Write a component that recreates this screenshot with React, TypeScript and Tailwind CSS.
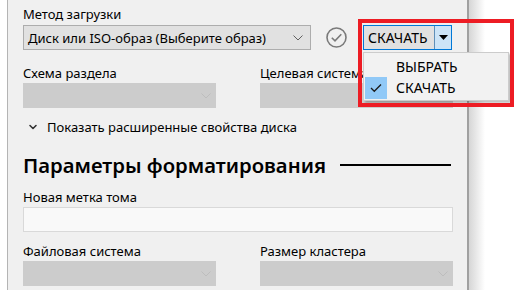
import { ChevronDown } from 'lucide-react';

const font = "font-['Noto_Sans','Open_Sans',sans-serif]";

/** Small windows-style chevron used in combo boxes */
function ComboChevron({ color = '#606060' }: { color?: string }) {
  return (
    <svg width="10" height="6" viewBox="0 0 10 6" fill="none">
      <path d="M0.5 0.5 5 5 9.5 0.5" stroke={color} strokeWidth="1" />
    </svg>
  );
}

function DisabledCombo({ className = '' }: { className?: string }) {
  return (
    <div className={`h-[25px] bg-[#cccccc] flex items-center justify-end pr-[5px] ${className}`}>
      <ComboChevron color="#bdbdbd" />
    </div>
  );
}

export default function App() {
  return (
    <div className={`relative w-[516px] h-[290px] bg-white overflow-hidden flex text-[13px] text-[#000] ${font}`}>
      <div className="w-[7px] shrink-0 bg-white" />
      <div className="w-[462px] shrink-0 h-full bg-[#f0f0f0] border-l border-l-[#b4b4b4] border-r-2 border-r-[#a0a0a0] pl-[15px] pt-[4px]">
        {/* Метод загрузки */}
        <div className="h-[21px] leading-[20px]">Метод загрузки</div>
        <div className="flex items-center h-[25px]">
          <div className="w-[288px] h-[25px] bg-[#e1e1e1] border border-[#adadad] flex items-center justify-between pl-[4px] pr-[7px]">
            <span className="leading-[20px] text-[#000]">Диск или ISO-образ (Выберите образ)</span>
            <ComboChevron />
          </div>
          <div className="ml-[15px]">
            <svg width="21" height="21" viewBox="0 0 21 21" fill="none">
              <circle cx="10.5" cy="10.5" r="9.5" stroke="#7a7a7a" strokeWidth="1.6" />
              <path d="M5.8 10.7 9 13.9 15.3 7.3" stroke="#7a7a7a" strokeWidth="1.6" />
            </svg>
          </div>
          <div className="ml-[16px] w-[89px] h-[25px] border border-[#0078d7] flex text-[14px]">
            <div className="flex-1 bg-[#e1e1e1] flex items-center pl-[4px] leading-[20px] border-r border-r-[#5f8fb8]">
              СКАЧАТЬ
            </div>
            <div className="w-[16px] bg-[#cce4f7] flex items-center justify-center">
              <svg width="9" height="5" viewBox="0 0 9 5">
                <path d="M0 0H9L4.5 5Z" fill="#000" />
              </svg>
            </div>
          </div>
        </div>

        {/* Схема раздела / Целевая система */}
        <div className="grid grid-cols-[193px_193px] gap-x-[44px] mt-[13px]">
          <div className="h-[20px] leading-[20px]">Схема раздела</div>
          <div className="h-[20px] leading-[20px] whitespace-nowrap">Целевая система</div>
          <DisabledCombo />
          <DisabledCombo />
        </div>

        <div className="mt-[9px] h-[20px] flex items-center leading-[20px]">
          <ChevronDown size={12} strokeWidth={3.2} className="ml-[4px] mr-[8px] text-[#333]" />
          <span>Показать расширенные свойства диска</span>
        </div>

        <div className="mt-[15px] h-[26px] flex items-center">
          <span className="text-[20.3px] font-semibold leading-[26px] text-[#000]">Параметры форматирования</span>
          <div className="ml-[14px] w-[111px] h-[2px] bg-[#000]" />
        </div>

        <div className="mt-[9px] h-[20px] leading-[20px]">Новая метка тома</div>
        <div className="w-[430px] h-[25px] bg-[#f9f9f9] border border-[#d9d9d9]" />

        <div className="grid grid-cols-[193px_193px] gap-x-[44px] mt-[9px]">
          <div className="h-[20px] leading-[20px]">Файловая система</div>
          <div className="h-[20px] leading-[20px]">Размер кластера</div>
          <DisabledCombo />
          <DisabledCombo />
        </div>
      </div>
      <div className="w-[16px] shrink-0 h-full bg-gradient-to-r from-[#d6d6d6] to-white" />

      {/* dropdown popup */}
      <div className="absolute left-[363px] top-[52px] w-[146px] h-[49px] bg-[#f2f2f2] border border-[#cccccc] shadow-[2px_2px_2px_rgba(0,0,0,0.25)] text-[14px]">
        <div className="absolute left-[32px] top-[4px] leading-[20px]">ВЫБРАТЬ</div>
        <div className="absolute left-[1px] top-[24px] w-[22px] h-[22px] bg-[#91c9f7] flex items-center justify-center">
          <svg width="12" height="10" viewBox="0 0 12 10" fill="none">
            <path d="M1 5 4.3 8.3 11 1.5" stroke="#1a1a1a" strokeWidth="1.3" />
          </svg>
        </div>
        <div className="absolute left-[32px] top-[25px] leading-[20px]">СКАЧАТЬ</div>
      </div>

      {/* red highlight */}
      <div className="absolute left-[358px] top-[19px] w-[156px] h-[88px] border-[4px] border-[#ed1c24]" />
    </div>
  );
}
